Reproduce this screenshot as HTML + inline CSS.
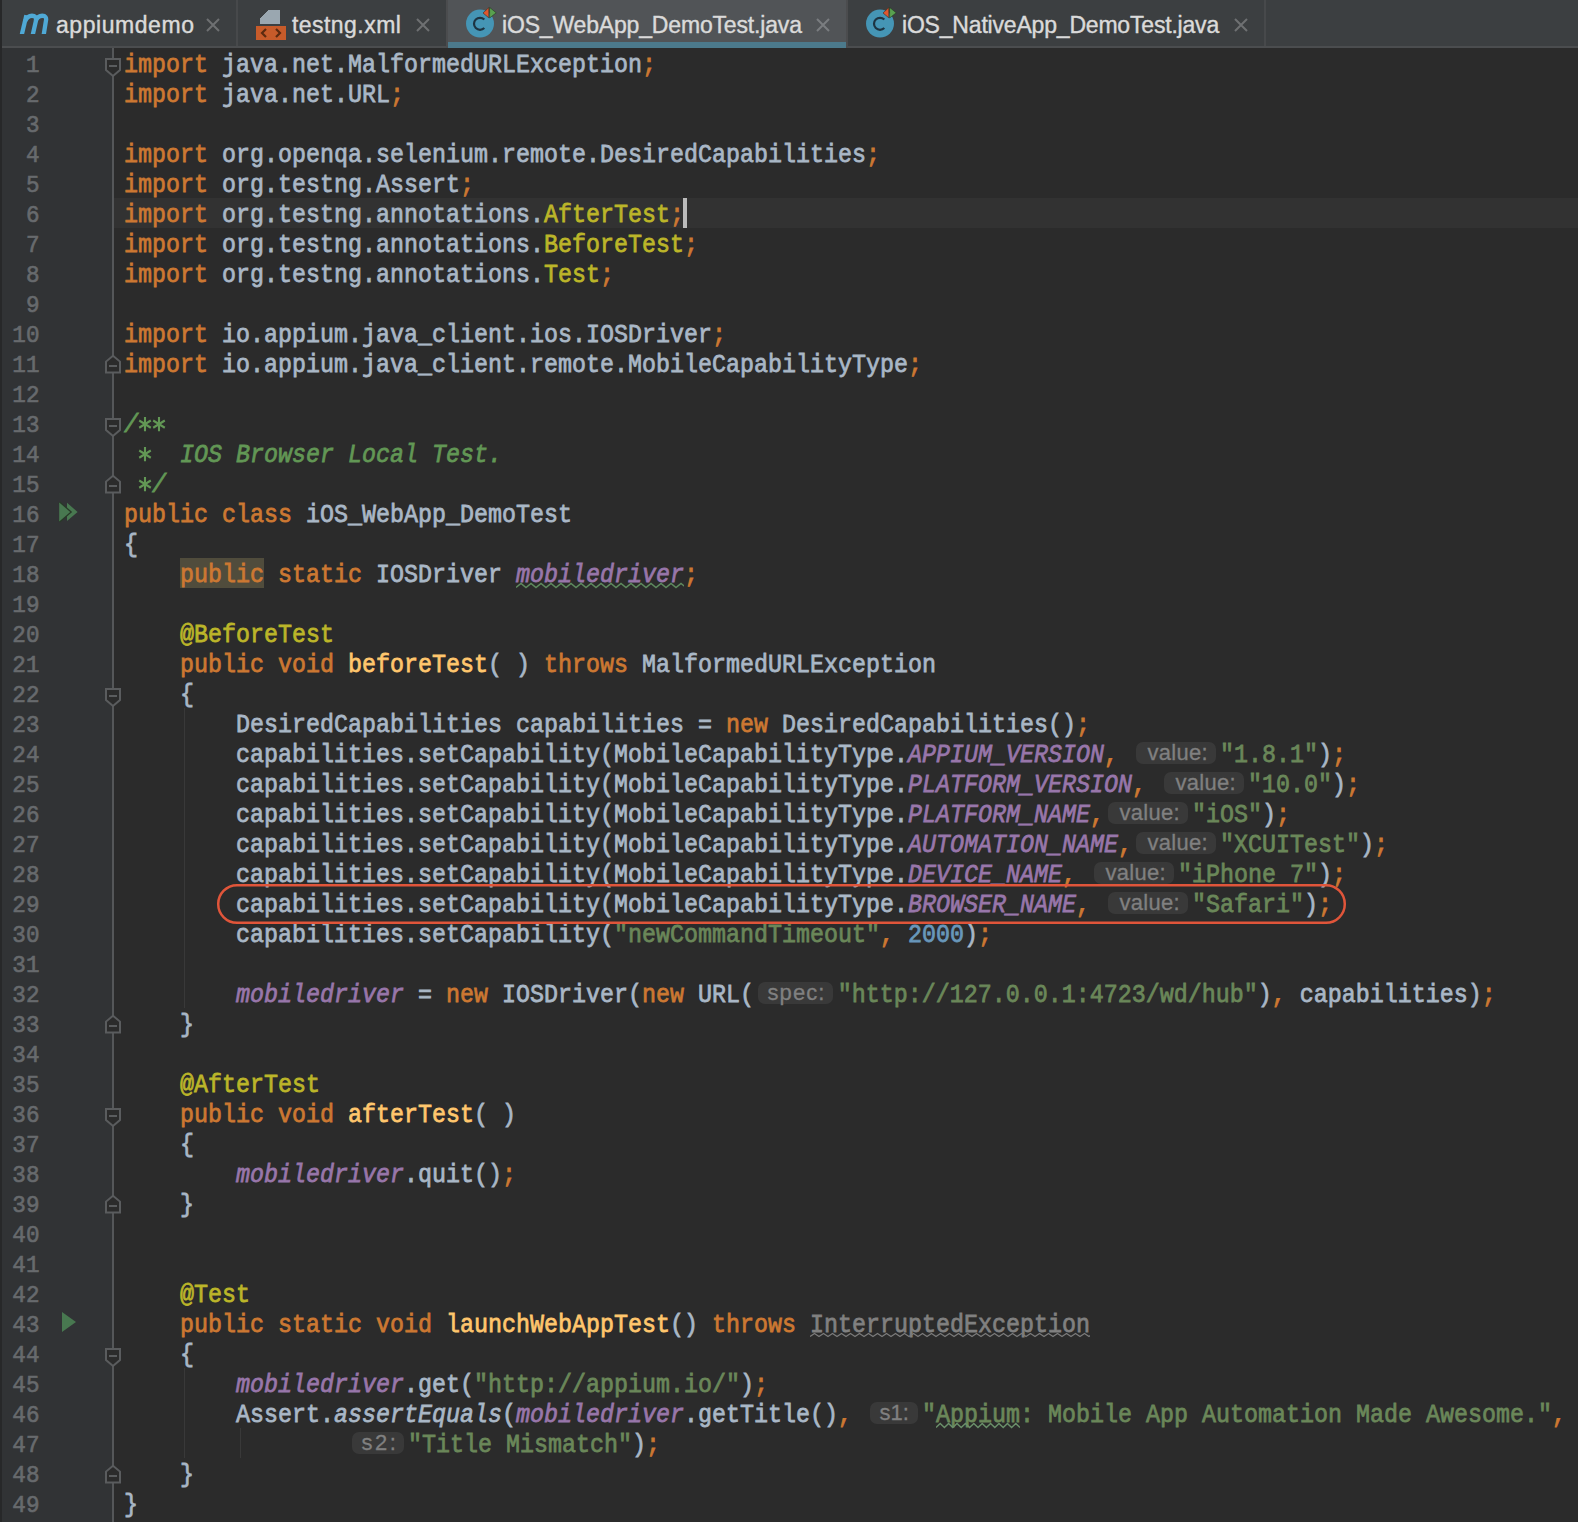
<!DOCTYPE html>
<html><head><meta charset="utf-8"><style>
html,body{margin:0;padding:0}
body{width:1578px;height:1522px;background:#2B2B2B;position:relative;overflow:hidden}
#gut{position:absolute;left:0;top:48px;width:112px;height:1474px;background:#313335}
#edgel{position:absolute;left:0;top:0;width:2px;height:1522px;background:#272829}
#foldline{position:absolute;left:112px;top:48px;width:2px;height:1474px;background:#555759}
.fold{position:absolute;left:104px}
.ln{position:absolute;left:124px;height:30px;line-height:30px;font-family:"Liberation Mono",monospace;font-size:23.3333px;white-space:pre;color:#A9B7C6;transform-origin:0 20.5px;transform:translateY(3.4px) scaleY(1.08);-webkit-text-stroke:0.7px currentColor}
.num{position:absolute;left:0;width:40px;text-align:right;height:30px;line-height:30px;font-family:"Liberation Mono",monospace;font-size:23.3333px;color:#676A6D;transform-origin:40px 20.5px;transform:translate(-0.5px,3.4px) scale(0.97,1.03);-webkit-text-stroke:0.6px currentColor}
.k{color:#CC7832}
.kbg{color:#CC7832}
.t{color:#A9B7C6}
.a{color:#BBB529}
.s{color:#6A8759}
.sw{color:#6A8759}
.n{color:#6897BB}
.d{color:#629755;font-style:italic}
.f{color:#9876AA;font-style:italic}
.fw{color:#9876AA;font-style:italic}
.m{color:#FFC66D}
.ast{vertical-align:top}
.i{font-style:italic}
.g,.gw{color:#808080}
.h{display:inline-block;height:10px}
.hv{width:88px}.hp{width:83.8px}.hs1{width:56px}.hs2{width:60px}
.hb{position:absolute;height:22px;line-height:22px;border-radius:7px;background:#393939;color:#808080;font-family:"Liberation Sans",sans-serif;font-size:22px;-webkit-text-stroke:0.3px currentColor;text-align:left;box-sizing:border-box;padding-left:9.5px;white-space:pre}
.hbv{width:80px;letter-spacing:0.3px;padding-left:11.5px}.hbp{width:75.4px;letter-spacing:1.1px}.hbs1{width:47.7px}.hbs2{width:52px;letter-spacing:2.5px}
#curline{position:absolute;left:114px;top:198px;width:1464px;height:30px;background:#323232}
#caret{position:absolute;left:683px;top:198px;width:4px;height:30px;background:#BBBBBB}
#tabs{position:absolute;left:0;top:0;width:1578px;height:46px;background:#3C3F41}
#tabline{position:absolute;left:0;top:46px;width:1578px;height:2px;background:#4B4D4F}
.tab{position:absolute;top:0;height:46px}
.sep{position:absolute;top:0;width:2px;height:46px;background:#47494B}
.tt{position:absolute;top:1.5px;height:46px;line-height:46px;font-family:"Liberation Sans",sans-serif;font-size:23px;color:#DADADA;white-space:pre;-webkit-text-stroke:0.4px currentColor}
.x{position:absolute;top:18px}
</style></head><body>

<div id="tabs"></div>
<div id="tabline"></div>
<div class="tab" style="left:448px;width:398px;height:48px;background:#515457"></div>
<div style="position:absolute;left:448px;top:42px;width:398px;height:6px;background:#4C7A8C"></div>
<div class="sep" style="left:236px"></div>
<div class="sep" style="left:446px;background:#4B4C4E;height:48px"></div>
<div class="sep" style="left:846px;background:#4B4C4E;height:48px"></div>
<div class="sep" style="left:1264px"></div>
<!-- m icon -->
<svg style="position:absolute;left:0;top:0" width="56" height="46" viewBox="0 0 56 46"><defs><clipPath id="mc"><rect x="0" y="0" width="56" height="33.9"/></clipPath></defs><g clip-path="url(#mc)" fill="none" stroke="#4FA9D6" stroke-width="4.3"><path d="M21.6 35.5 L26.4 15.2"/><path d="M25.2 21 C26.8 17 29.5 15.75 32 15.75 C35 15.75 36.6 17.5 36 20.5 L32.6 35.5"/><path d="M35.5 21 C37.1 17 39.8 15.75 42.3 15.75 C45.3 15.75 46.6 17.5 46 20.5 L43.6 35.5"/></g></svg>
<div class="tt" style="left:56px;letter-spacing:0.55px">appiumdemo</div>
<svg class="x" style="left:206px" width="14" height="14"><path d="M1 1L13 13M13 1L1 13" stroke="#6E7072" stroke-width="2"/></svg>
<!-- xml icon -->
<svg style="position:absolute;left:256px;top:10px" width="30" height="30" viewBox="0 0 30 30"><path d="M4 8 L12 0 H24 V14 H4 Z" fill="#9AA7B0"/><path d="M4 8 L12 0" stroke="#3C3F41" stroke-width="1"/><rect x="0" y="16" width="30" height="14" fill="#C75B2A"/><path d="M10 19 L6 23 L10 27 M20 19 L24 23 L20 27" stroke="#5B2A10" stroke-width="2.2" fill="none"/></svg>
<div class="tt" style="left:292px;letter-spacing:0.45px">testng.xml</div>
<svg class="x" style="left:416px" width="14" height="14"><path d="M1 1L13 13M13 1L1 13" stroke="#6E7072" stroke-width="2"/></svg>
<!-- class icon active -->
<svg style="position:absolute;left:464px;top:0px" width="40" height="46" viewBox="0 0 40 46"><circle cx="16" cy="23.6" r="14" fill="#4595B5"/><path d="M20.3 19.6 A6 6 0 1 0 20.3 28" fill="none" stroke="#1E3442" stroke-width="2.2"/><path d="M19 13 L24.8 7.6 V17.8 Z" fill="#E0572E" stroke="#3a2a20" stroke-width="0.6"/><path d="M25.6 7.4 L32.2 12.8 L25.6 18 Z" fill="#59A14F" stroke="#233a22" stroke-width="0.6"/></svg>
<div class="tt" style="left:502px;letter-spacing:-0.17px">iOS_WebApp_DemoTest.java</div>
<svg class="x" style="left:816px" width="14" height="14"><path d="M1 1L13 13M13 1L1 13" stroke="#7A7D80" stroke-width="2"/></svg>
<!-- class icon native -->
<svg style="position:absolute;left:864px;top:0px" width="40" height="46" viewBox="0 0 40 46"><circle cx="16" cy="23.6" r="14" fill="#4595B5"/><path d="M20.3 19.6 A6 6 0 1 0 20.3 28" fill="none" stroke="#1E3442" stroke-width="2.2"/><path d="M19 13 L24.8 7.6 V17.8 Z" fill="#E0572E" stroke="#3a2a20" stroke-width="0.6"/><path d="M25.6 7.4 L32.2 12.8 L25.6 18 Z" fill="#59A14F" stroke="#233a22" stroke-width="0.6"/></svg>
<div class="tt" style="left:902px;letter-spacing:-0.19px">iOS_NativeApp_DemoTest.java</div>
<svg class="x" style="left:1234px" width="14" height="14"><path d="M1 1L13 13M13 1L1 13" stroke="#6E7072" stroke-width="2"/></svg>

<div id="gut"></div>
<div id="edgel"></div>
<div id="curline"></div>
<div id="foldline"></div>

<div style="position:absolute;left:184px;top:708px;width:1px;height:300px;background:#393939"></div>
<div style="position:absolute;left:184px;top:1368px;width:1px;height:90px;background:#393939"></div>
<div style="position:absolute;left:240px;top:1428px;width:1px;height:30px;background:#393939"></div>

<svg class="fold" style="top:48px" width="18" height="30" viewBox="0 0 18 30"><path d="M2 11 H16 V22 L9 28 L2 22 Z" fill="#2B2B2B" stroke="#5A5C5E" stroke-width="2"/><rect x="5" y="17" width="8" height="2" fill="#5A5C5E"/></svg><svg class="fold" style="top:408px" width="18" height="30" viewBox="0 0 18 30"><path d="M2 11 H16 V22 L9 28 L2 22 Z" fill="#2B2B2B" stroke="#5A5C5E" stroke-width="2"/><rect x="5" y="17" width="8" height="2" fill="#5A5C5E"/></svg><svg class="fold" style="top:678px" width="18" height="30" viewBox="0 0 18 30"><path d="M2 11 H16 V22 L9 28 L2 22 Z" fill="#2B2B2B" stroke="#5A5C5E" stroke-width="2"/><rect x="5" y="17" width="8" height="2" fill="#5A5C5E"/></svg><svg class="fold" style="top:1098px" width="18" height="30" viewBox="0 0 18 30"><path d="M2 11 H16 V22 L9 28 L2 22 Z" fill="#2B2B2B" stroke="#5A5C5E" stroke-width="2"/><rect x="5" y="17" width="8" height="2" fill="#5A5C5E"/></svg><svg class="fold" style="top:1338px" width="18" height="30" viewBox="0 0 18 30"><path d="M2 11 H16 V22 L9 28 L2 22 Z" fill="#2B2B2B" stroke="#5A5C5E" stroke-width="2"/><rect x="5" y="17" width="8" height="2" fill="#5A5C5E"/></svg><svg class="fold" style="top:348px" width="18" height="30" viewBox="0 0 18 30"><path d="M2 24.6 H16 V13.6 L9 7.8 L2 13.6 Z" fill="#2B2B2B" stroke="#5A5C5E" stroke-width="2"/><rect x="5" y="17" width="8" height="2" fill="#5A5C5E"/></svg><svg class="fold" style="top:468px" width="18" height="30" viewBox="0 0 18 30"><path d="M2 24.6 H16 V13.6 L9 7.8 L2 13.6 Z" fill="#2B2B2B" stroke="#5A5C5E" stroke-width="2"/><rect x="5" y="17" width="8" height="2" fill="#5A5C5E"/></svg><svg class="fold" style="top:1008px" width="18" height="30" viewBox="0 0 18 30"><path d="M2 24.6 H16 V13.6 L9 7.8 L2 13.6 Z" fill="#2B2B2B" stroke="#5A5C5E" stroke-width="2"/><rect x="5" y="17" width="8" height="2" fill="#5A5C5E"/></svg><svg class="fold" style="top:1188px" width="18" height="30" viewBox="0 0 18 30"><path d="M2 24.6 H16 V13.6 L9 7.8 L2 13.6 Z" fill="#2B2B2B" stroke="#5A5C5E" stroke-width="2"/><rect x="5" y="17" width="8" height="2" fill="#5A5C5E"/></svg><svg class="fold" style="top:1458px" width="18" height="30" viewBox="0 0 18 30"><path d="M2 24.6 H16 V13.6 L9 7.8 L2 13.6 Z" fill="#2B2B2B" stroke="#5A5C5E" stroke-width="2"/><rect x="5" y="17" width="8" height="2" fill="#5A5C5E"/></svg>

<svg style="position:absolute;left:56px;top:500px" width="26" height="26" viewBox="0 0 26 26"><path d="M11 2.7 V21.1 L21.6 12 Z" fill="#487850"/><path d="M3.2 2.4 L14.2 12 L3.2 21.6" fill="none" stroke="#283A28" stroke-width="2.6"/><path d="M3.2 2.4 V21.6 L14.2 12 Z" fill="#487850"/></svg>
<svg style="position:absolute;left:60px;top:1310px" width="20" height="24" viewBox="0 0 20 24"><path d="M2 2 V22 L16 12 Z" fill="#487850"/></svg>

<div style="position:absolute;left:180px;top:558px;width:84px;height:30px;background:#504C3C"></div>
<div class="hb hbv" style="left:1136.0px;top:742px">value:</div><div class="hb hbv" style="left:1164.0px;top:772px">value:</div><div class="hb hbv" style="left:1108.0px;top:802px">value:</div><div class="hb hbv" style="left:1136.0px;top:832px">value:</div><div class="hb hbv" style="left:1094.0px;top:862px">value:</div><div class="hb hbv" style="left:1108.0px;top:892px">value:</div><div class="hb hbp" style="left:758.0px;top:982px">spec:</div><div class="hb hbs1" style="left:870.0px;top:1402px">s1:</div><div class="hb hbs2" style="left:352.0px;top:1432px">s2:</div>
<div class="ln" style="top:48px"><span class="k">import</span><span class="t"> java.net.MalformedURLException</span><span class="k">;</span></div>
<div class="num" style="top:48px">1</div>
<div class="ln" style="top:78px"><span class="k">import</span><span class="t"> java.net.URL</span><span class="k">;</span></div>
<div class="num" style="top:78px">2</div>
<div class="ln" style="top:108px"></div>
<div class="num" style="top:108px">3</div>
<div class="ln" style="top:138px"><span class="k">import</span><span class="t"> org.openqa.selenium.remote.DesiredCapabilities</span><span class="k">;</span></div>
<div class="num" style="top:138px">4</div>
<div class="ln" style="top:168px"><span class="k">import</span><span class="t"> org.testng.Assert</span><span class="k">;</span></div>
<div class="num" style="top:168px">5</div>
<div class="ln" style="top:198px"><span class="k">import</span><span class="t"> org.testng.annotations.</span><span class="a">AfterTest</span><span class="k">;</span></div>
<div class="num" style="top:198px">6</div>
<div class="ln" style="top:228px"><span class="k">import</span><span class="t"> org.testng.annotations.</span><span class="a">BeforeTest</span><span class="k">;</span></div>
<div class="num" style="top:228px">7</div>
<div class="ln" style="top:258px"><span class="k">import</span><span class="t"> org.testng.annotations.</span><span class="a">Test</span><span class="k">;</span></div>
<div class="num" style="top:258px">8</div>
<div class="ln" style="top:288px"></div>
<div class="num" style="top:288px">9</div>
<div class="ln" style="top:318px"><span class="k">import</span><span class="t"> io.appium.java_client.ios.IOSDriver</span><span class="k">;</span></div>
<div class="num" style="top:318px">10</div>
<div class="ln" style="top:348px"><span class="k">import</span><span class="t"> io.appium.java_client.remote.MobileCapabilityType</span><span class="k">;</span></div>
<div class="num" style="top:348px">11</div>
<div class="ln" style="top:378px"></div>
<div class="num" style="top:378px">12</div>
<div class="ln" style="top:408px"><span class="d">/</span><svg class="ast" width="14" height="30" viewBox="0 0 14 30"><g stroke="#629755" stroke-width="2.1"><path d="M7 6.7 V20"/><path d="M1.2 9.95 L12.8 16.75"/><path d="M1.2 16.75 L12.8 9.95"/></g></svg><svg class="ast" width="14" height="30" viewBox="0 0 14 30"><g stroke="#629755" stroke-width="2.1"><path d="M7 6.7 V20"/><path d="M1.2 9.95 L12.8 16.75"/><path d="M1.2 16.75 L12.8 9.95"/></g></svg></div>
<div class="num" style="top:408px">13</div>
<div class="ln" style="top:438px"><span class="d"> </span><svg class="ast" width="14" height="30" viewBox="0 0 14 30"><g stroke="#629755" stroke-width="2.1"><path d="M7 6.7 V20"/><path d="M1.2 9.95 L12.8 16.75"/><path d="M1.2 16.75 L12.8 9.95"/></g></svg><span class="d">  IOS Browser Local Test.</span></div>
<div class="num" style="top:438px">14</div>
<div class="ln" style="top:468px"><span class="d"> </span><svg class="ast" width="14" height="30" viewBox="0 0 14 30"><g stroke="#629755" stroke-width="2.1"><path d="M7 6.7 V20"/><path d="M1.2 9.95 L12.8 16.75"/><path d="M1.2 16.75 L12.8 9.95"/></g></svg><span class="d">/</span></div>
<div class="num" style="top:468px">15</div>
<div class="ln" style="top:498px"><span class="k">public class </span><span class="t">iOS_WebApp_DemoTest</span></div>
<div class="num" style="top:498px">16</div>
<div class="ln" style="top:528px"><span class="t">{</span></div>
<div class="num" style="top:528px">17</div>
<div class="ln" style="top:558px"><span class="t">    </span><span class="kbg">public</span><span class="k"> static </span><span class="t">IOSDriver </span><span class="fw">mobiledriver</span><span class="k">;</span></div>
<div class="num" style="top:558px">18</div>
<div class="ln" style="top:588px"></div>
<div class="num" style="top:588px">19</div>
<div class="ln" style="top:618px"><span class="t">    </span><span class="a">@BeforeTest</span></div>
<div class="num" style="top:618px">20</div>
<div class="ln" style="top:648px"><span class="t">    </span><span class="k">public void </span><span class="m">beforeTest</span><span class="t">( ) </span><span class="k">throws </span><span class="t">MalformedURLException</span></div>
<div class="num" style="top:648px">21</div>
<div class="ln" style="top:678px"><span class="t">    {</span></div>
<div class="num" style="top:678px">22</div>
<div class="ln" style="top:708px"><span class="t">        DesiredCapabilities capabilities = </span><span class="k">new </span><span class="t">DesiredCapabilities()</span><span class="k">;</span></div>
<div class="num" style="top:708px">23</div>
<div class="ln" style="top:738px"><span class="t">        capabilities.setCapability(MobileCapabilityType.</span><span class="f">APPIUM_VERSION</span><span class="k">,</span><span class="t"> </span><span class="h hv"></span><span class="s">"1.8.1"</span><span class="t">)</span><span class="k">;</span></div>
<div class="num" style="top:738px">24</div>
<div class="ln" style="top:768px"><span class="t">        capabilities.setCapability(MobileCapabilityType.</span><span class="f">PLATFORM_VERSION</span><span class="k">,</span><span class="t"> </span><span class="h hv"></span><span class="s">"10.0"</span><span class="t">)</span><span class="k">;</span></div>
<div class="num" style="top:768px">25</div>
<div class="ln" style="top:798px"><span class="t">        capabilities.setCapability(MobileCapabilityType.</span><span class="f">PLATFORM_NAME</span><span class="k">,</span><span class="h hv"></span><span class="s">"iOS"</span><span class="t">)</span><span class="k">;</span></div>
<div class="num" style="top:798px">26</div>
<div class="ln" style="top:828px"><span class="t">        capabilities.setCapability(MobileCapabilityType.</span><span class="f">AUTOMATION_NAME</span><span class="k">,</span><span class="h hv"></span><span class="s">"XCUITest"</span><span class="t">)</span><span class="k">;</span></div>
<div class="num" style="top:828px">27</div>
<div class="ln" style="top:858px"><span class="t">        capabilities.setCapability(MobileCapabilityType.</span><span class="f">DEVICE_NAME</span><span class="k">,</span><span class="t"> </span><span class="h hv"></span><span class="s">"iPhone 7"</span><span class="t">)</span><span class="k">;</span></div>
<div class="num" style="top:858px">28</div>
<div class="ln" style="top:888px"><span class="t">        capabilities.setCapability(MobileCapabilityType.</span><span class="f">BROWSER_NAME</span><span class="k">,</span><span class="t"> </span><span class="h hv"></span><span class="s">"Safari"</span><span class="t">)</span><span class="k">;</span></div>
<div class="num" style="top:888px">29</div>
<div class="ln" style="top:918px"><span class="t">        capabilities.setCapability(</span><span class="s">"newCommandTimeout"</span><span class="k">,</span><span class="t"> </span><span class="n">2000</span><span class="t">)</span><span class="k">;</span></div>
<div class="num" style="top:918px">30</div>
<div class="ln" style="top:948px"></div>
<div class="num" style="top:948px">31</div>
<div class="ln" style="top:978px"><span class="t">        </span><span class="f">mobiledriver</span><span class="t"> = </span><span class="k">new </span><span class="t">IOSDriver(</span><span class="k">new </span><span class="t">URL(</span><span class="h hp"></span><span class="s">"http://127.0.0.1:4723/wd/hub"</span><span class="t">)</span><span class="k">,</span><span class="t"> capabilities)</span><span class="k">;</span></div>
<div class="num" style="top:978px">32</div>
<div class="ln" style="top:1008px"><span class="t">    }</span></div>
<div class="num" style="top:1008px">33</div>
<div class="ln" style="top:1038px"></div>
<div class="num" style="top:1038px">34</div>
<div class="ln" style="top:1068px"><span class="t">    </span><span class="a">@AfterTest</span></div>
<div class="num" style="top:1068px">35</div>
<div class="ln" style="top:1098px"><span class="t">    </span><span class="k">public void </span><span class="m">afterTest</span><span class="t">( )</span></div>
<div class="num" style="top:1098px">36</div>
<div class="ln" style="top:1128px"><span class="t">    {</span></div>
<div class="num" style="top:1128px">37</div>
<div class="ln" style="top:1158px"><span class="t">        </span><span class="f">mobiledriver</span><span class="t">.quit()</span><span class="k">;</span></div>
<div class="num" style="top:1158px">38</div>
<div class="ln" style="top:1188px"><span class="t">    }</span></div>
<div class="num" style="top:1188px">39</div>
<div class="ln" style="top:1218px"></div>
<div class="num" style="top:1218px">40</div>
<div class="ln" style="top:1248px"></div>
<div class="num" style="top:1248px">41</div>
<div class="ln" style="top:1278px"><span class="t">    </span><span class="a">@Test</span></div>
<div class="num" style="top:1278px">42</div>
<div class="ln" style="top:1308px"><span class="t">    </span><span class="k">public static void </span><span class="m">launchWebAppTest</span><span class="t">() </span><span class="k">throws </span><span class="gw">InterruptedException</span></div>
<div class="num" style="top:1308px">43</div>
<div class="ln" style="top:1338px"><span class="t">    {</span></div>
<div class="num" style="top:1338px">44</div>
<div class="ln" style="top:1368px"><span class="t">        </span><span class="f">mobiledriver</span><span class="t">.get(</span><span class="s">"http://appium.io/"</span><span class="t">)</span><span class="k">;</span></div>
<div class="num" style="top:1368px">45</div>
<div class="ln" style="top:1398px"><span class="t">        Assert.</span><span class="i">assertEquals</span><span class="t">(</span><span class="f">mobiledriver</span><span class="t">.getTitle()</span><span class="k">,</span><span class="t"> </span><span class="h hs1"></span><span class="s">"</span><span class="sw">Appium</span><span class="s">: Mobile App Automation Made Awesome."</span><span class="k">,</span></div>
<div class="num" style="top:1398px">46</div>
<div class="ln" style="top:1428px"><span class="t">                </span><span class="h hs2"></span><span class="s">"Title Mismatch"</span><span class="t">)</span><span class="k">;</span></div>
<div class="num" style="top:1428px">47</div>
<div class="ln" style="top:1458px"><span class="t">    }</span></div>
<div class="num" style="top:1458px">48</div>
<div class="ln" style="top:1488px"><span class="t">}</span></div>
<div class="num" style="top:1488px">49</div>
<div id="caret"></div>

<svg style="position:absolute;left:516px;top:582px" width="168" height="8"><path d="M0 5.5 L5.0 1.5 L10.0 5.5 L15.0 1.5 L20.0 5.5 L25.0 1.5 L30.0 5.5 L35.0 1.5 L40.0 5.5 L45.0 1.5 L50.0 5.5 L55.0 1.5 L60.0 5.5 L65.0 1.5 L70.0 5.5 L75.0 1.5 L80.0 5.5 L85.0 1.5 L90.0 5.5 L95.0 1.5 L100.0 5.5 L105.0 1.5 L110.0 5.5 L115.0 1.5 L120.0 5.5 L125.0 1.5 L130.0 5.5 L135.0 1.5 L140.0 5.5 L145.0 1.5 L150.0 5.5 L155.0 1.5 L160.0 5.5 L165.0 1.5 L170.0 5.5" fill="none" stroke="#5E8A5E" stroke-width="1.5"/></svg>
<svg style="position:absolute;left:810px;top:1332px" width="280" height="7"><path d="M0 4.5 L4.5 1.5 L9.0 4.5 L13.5 1.5 L18.0 4.5 L22.5 1.5 L27.0 4.5 L31.5 1.5 L36.0 4.5 L40.5 1.5 L45.0 4.5 L49.5 1.5 L54.0 4.5 L58.5 1.5 L63.0 4.5 L67.5 1.5 L72.0 4.5 L76.5 1.5 L81.0 4.5 L85.5 1.5 L90.0 4.5 L94.5 1.5 L99.0 4.5 L103.5 1.5 L108.0 4.5 L112.5 1.5 L117.0 4.5 L121.5 1.5 L126.0 4.5 L130.5 1.5 L135.0 4.5 L139.5 1.5 L144.0 4.5 L148.5 1.5 L153.0 4.5 L157.5 1.5 L162.0 4.5 L166.5 1.5 L171.0 4.5 L175.5 1.5 L180.0 4.5 L184.5 1.5 L189.0 4.5 L193.5 1.5 L198.0 4.5 L202.5 1.5 L207.0 4.5 L211.5 1.5 L216.0 4.5 L220.5 1.5 L225.0 4.5 L229.5 1.5 L234.0 4.5 L238.5 1.5 L243.0 4.5 L247.5 1.5 L252.0 4.5 L256.5 1.5 L261.0 4.5 L265.5 1.5 L270.0 4.5 L274.5 1.5 L279.0 4.5 L283.5 1.5" fill="none" stroke="#7A7A7A" stroke-width="1.3"/></svg>
<svg style="position:absolute;left:936px;top:1422px" width="84" height="8"><path d="M0 5.5 L4.2 1.5 L8.4 5.5 L12.6 1.5 L16.8 5.5 L21.0 1.5 L25.2 5.5 L29.4 1.5 L33.6 5.5 L37.8 1.5 L42.0 5.5 L46.2 1.5 L50.4 5.5 L54.6 1.5 L58.8 5.5 L63.0 1.5 L67.2 5.5 L71.4 1.5 L75.6 5.5 L79.8 1.5 L84.0 5.5" fill="none" stroke="#6A8F6A" stroke-width="1.5"/></svg>


<svg style="position:absolute;left:0;top:0" width="1578" height="1522"><rect x="218.2" y="885.2" width="1126.6" height="37.6" rx="18.8" ry="18.8" fill="none" stroke="#E0553A" stroke-width="2.5"/></svg>

</body></html>
